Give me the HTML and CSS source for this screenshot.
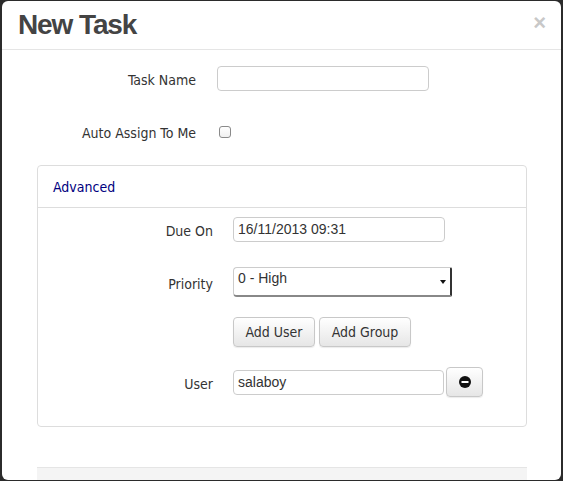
FILE: index.html
```html
<!DOCTYPE html>
<html>
<head>
<meta charset="utf-8">
<link rel="stylesheet" href="styles.css">
</head>
<body>
<div class="modal">
  <div class="modal-header">
    <h3 class="title">New Task</h3>
    <span class="close">×</span>
  </div>
  <div class="modal-body">
    <div class="row row-first">
      <label class="label">Task Name</label>
      <div class="input"></div>
    </div>
    <div class="row row-check">
      <label class="label">Auto Assign To Me</label>
      <span class="checkbox"></span>
    </div>
    <div class="panel">
      <div class="panel-heading"><span class="link">Advanced</span></div>
      <div class="panel-body">
        <div class="prow">
          <label class="plabel">Due On</label>
          <div class="input">16/11/2013 09:31</div>
        </div>
        <div class="prow prow-gap">
          <label class="plabel">Priority</label>
          <div class="select"><span class="select-text">0 - High</span><span class="caret"></span></div>
        </div>
        <div class="prow prow-gap">
          <span class="plabel"></span>
          <div class="btns">
            <button class="btn btn-user">Add User</button>
            <button class="btn btn-group">Add Group</button>
          </div>
        </div>
        <div class="prow prow-gap">
          <label class="plabel">User</label>
          <div class="input input-user">salaboy</div>
          <button class="btn btn-icon">
            <svg width="12" height="12" viewBox="0 0 12 12"><circle cx="6" cy="6" r="6" fill="#111"/><rect x="2.5" y="5" width="7" height="2" fill="#fff"/></svg>
          </button>
        </div>
      </div>
    </div>
    <div class="footer"></div>
  </div>
</div>
</body>
</html>
```
FILE: styles.css
```css
html, body {
  margin: 0;
  padding: 0;
}
body {
  background: #2b2b2b;
  height: 481px;
  overflow: hidden;
  font-family: "DejaVu Sans Condensed", "DejaVu Sans", sans-serif;
  font-stretch: condensed;
  font-size: 14px;
  color: #333;
}
.modal {
  margin: 1px 2px 0;
  width: 559px;
  height: 479px;
  background: #fff;
  border-radius: 6px;
  overflow: hidden;
}
.modal-header {
  height: 48px;
  border-bottom: 1px solid #e5e5e5;
  display: flex;
  align-items: center;
  justify-content: space-between;
  padding: 0 15px 0 16px;
}
.title {
  margin: 0;
  font-family: "Liberation Sans", Arial, sans-serif;
  font-stretch: normal;
  font-weight: bold;
  font-size: 28px;
  letter-spacing: -1.1px;
  color: #444;
  line-height: 1;
}
.close {
  font-family: "Liberation Sans", Arial, sans-serif;
  font-stretch: normal;
  font-weight: bold;
  font-size: 22px;
  color: #c8c8c8;
  line-height: 1;
  margin-top: -5px;
}
.modal-body {
  padding: 16px 32px 0 35px;
}
.row {
  display: flex;
  align-items: center;
  height: 25px;
}
.row-check {
  margin-top: 28px;
}
.label {
  width: 159px;
  margin-right: 21px;
  text-align: right;
  padding-top: 3px;
}
.input {
  box-sizing: border-box;
  width: 212px;
  height: 25px;
  border: 1px solid #ccc;
  border-radius: 4px;
  padding: 0 4px;
  font-family: "Liberation Sans", Arial, sans-serif;
  font-stretch: normal;
  font-size: 14px;
  line-height: 23px;
  color: #333;
}
.checkbox {
  box-sizing: border-box;
  display: block;
  width: 12px;
  height: 12px;
  border: 1px solid #8a8a8a;
  border-radius: 3px;
  margin-left: 2px;
  background: linear-gradient(#fff, #f0f0f0);
}
.panel {
  margin-top: 21px;
  width: 490px;
  box-sizing: border-box;
  border: 1px solid #ddd;
  border-radius: 4px;
}
.panel-heading {
  height: 41px;
  border-bottom: 1px solid #ddd;
  padding: 0 15px;
  display: flex;
  align-items: center;
}
.link {
  color: #000080;
}
.panel-body {
  padding: 9px 0 29px;
}
.prow {
  display: flex;
  align-items: center;
}
.prow-gap {
  margin-top: 25px;
}
.prow-gap + .prow-gap {
  margin-top: 20px;
}
.plabel {
  width: 175px;
  margin-right: 20px;
  text-align: right;
  padding-top: 3px;
}
.select {
  box-sizing: border-box;
  width: 219px;
  height: 30px;
  border: 1px solid #ccc;
  border-right: 2px solid #333;
  border-bottom: 2px solid #888;
  border-radius: 4px 2px 2px 4px;
  display: flex;
  justify-content: space-between;
  padding: 2px 4px 0 4px;
  font-family: "Liberation Sans", Arial, sans-serif;
  font-stretch: normal;
  font-size: 14px;
  color: #333;
}
.caret {
  width: 0;
  height: 0;
  border-left: 3px solid transparent;
  border-right: 3px solid transparent;
  border-top: 4px solid #111;
  margin-top: 10px;
}
.btns {
  display: flex;
  gap: 4px;
}
.btn {
  box-sizing: border-box;
  height: 30px;
  border: 1px solid #c8c8c8;
  border-radius: 4px;
  background: linear-gradient(#ffffff, #e6e6e6);
  font-family: "DejaVu Sans Condensed", "DejaVu Sans", sans-serif;
  font-stretch: condensed;
  font-size: 14px;
  color: #333;
  padding: 0;
  box-shadow: 0 1px 1px rgba(0,0,0,0.08);
}
.btn-user {
  width: 82px;
}
.btn-group {
  width: 92px;
}
.input-user {
  width: 211px;
}
.btn-icon {
  width: 37px;
  margin-left: 2px;
  display: flex;
  align-items: center;
  justify-content: center;
}
.footer {
  margin-top: 40px;
  width: 490px;
  height: 20px;
  background: #f4f4f4;
  border-top: 1px solid #e5e5e5;
}
```
